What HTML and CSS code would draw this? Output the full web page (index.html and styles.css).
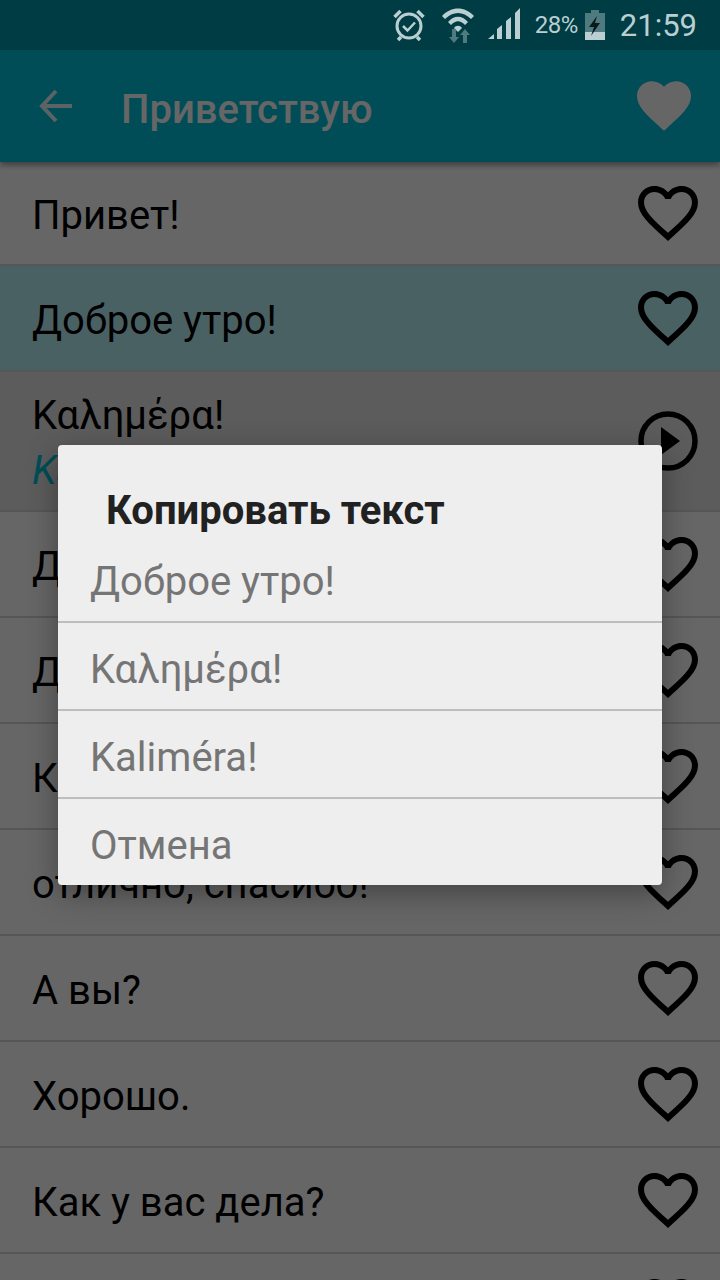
FILE: index.html
```html
<!DOCTYPE html>
<html lang="ru">
<head>
    <meta charset="UTF-8">
    <meta name="viewport" content="width=device-width, initial-scale=1.0">
    <title>Приветствую</title>
    <link rel="stylesheet" href="styles.css">
</head>
<body>
    <svg class="svg-defs" width="0" height="0">
        <symbol id="heart" viewBox="2 3 20 18.350">
            <path d="M16.500 3c-1.740 0-3.410.810-4.500 2.090C10.910 3.810 9.240 3 7.500 3 4.420 3 2 5.420 2 8.500c0 3.780 3.400 6.860 8.550 11.540L12 21.350l1.450-1.320C18.600 15.360 22 12.280 22 8.500 22 5.420 19.580 3 16.500 3zm-4.400 15.550l-.1.100-.110-.100C7.140 14.240 4 11.390 4 8.500 4 6.500 5.500 5 7.500 5c1.540 0 3.040.990 3.570 2.360h1.870C13.460 5.990 14.960 5 16.500 5c2 0 3.500 1.500 3.500 3.500 0 2.890-3.140 5.740-7.900 10.050z" fill="#000"/>
        </symbol>
    </svg>

    <div class="status-bar">
        <svg class="alarm-icon" width="34" height="34" viewBox="0 0 34 34" fill="none" stroke="#b9cfd2">
            <circle cx="17" cy="18" r="12" stroke-width="3"/>
            <path d="M11 18l4.500 4.500 7.500-8" stroke-width="2.500"/>
            <path d="M2.500 9l6-6M31.500 9l-6-6M9 29l-3 3M25 29l3 3" stroke-width="3.500"/>
        </svg>
        <svg class="wifi-icon" width="34" height="36" viewBox="0 0 34 36">
            <path d="M1 9C10-1 24-1 33 9l-3 3C22 4 12 4 4 12Z" fill="#b9cfd2"/>
            <path d="M7 15C13 8 21 8 27 15l-3 3C19 13 15 13 10 18Z" fill="#b9cfd2"/>
            <path d="M13 21C15 18 19 18 21 21l-4 4Z" fill="#b9cfd2"/>
            <path d="M11 22h4v8h3l-5 6-5-6h3ZM22 36v-8h-3l5-6 5 6h-3v8Z" fill="#4f7a80"/>
        </svg>
        <svg class="signal-icon" width="33" height="33" viewBox="0 0 33 33" fill="#b9cfd2">
            <path d="M0 32L6 27V32ZM9 32V22L14 18V32ZM18 32V14L23 10V32ZM27 32V6L32 1V32Z"/>
        </svg>
        <span class="battery-text">28%</span>
        <svg class="battery-icon" width="20" height="30" viewBox="0 0 20 30">
            <path d="M6 0H14V3H20V30H0V3H6Z" fill="#4f7a80"/>
            <path d="M0 22H20V30H0Z" fill="#b9cfd2"/>
            <path d="M12 6L4 17H9L6 26L15 13H10Z" fill="#0a1a1c"/>
        </svg>
        <span class="clock">21:59</span>
    </div>

    <div class="toolbar">
        <svg class="back-icon" width="34" height="34" viewBox="0 0 34 34" fill="none" stroke="#fff" stroke-width="4">
            <path d="M33 17H3M17 2L3 17l14 15"/>
        </svg>
        <div class="toolbar-title">Приветствую</div>
        <svg class="fav-icon" width="54" height="50" viewBox="2 3 20 18.350">
            <path d="M12 21.350l-1.450-1.320C5.400 15.360 2 12.280 2 8.500 2 5.420 4.420 3 7.500 3c1.740 0 3.410.810 4.500 2.090C13.090 3.810 14.760 3 16.500 3 19.580 3 22 5.420 22 8.500c0 3.780-3.400 6.860-8.550 11.540L12 21.350z" fill="#fff"/>
        </svg>
    </div>

    <div class="phrase-list">
        <div class="row row-first">
            <span class="row-text">Привет!</span>
            <svg class="heart"><use href="#heart"/></svg>
        </div>
        <div class="row row-active">
            <span class="row-text">Доброе утро!</span>
            <svg class="heart"><use href="#heart"/></svg>
        </div>
        <div class="row row-open">
            <div class="row-text">
                <div>Καλημέρα!</div>
                <div class="translit">Kaliméra!</div>
            </div>
            <svg class="play" width="60" height="60" viewBox="0 0 60 60">
                <circle cx="30" cy="30" r="27" fill="none" stroke="#000" stroke-width="5.500"/>
                <path d="M23 16L42 30L23 44Z" fill="#000"/>
            </svg>
        </div>
        <div class="row">
            <span class="row-text">Доброе утро!</span>
            <svg class="heart"><use href="#heart"/></svg>
        </div>
        <div class="row">
            <span class="row-text">Добрый день!</span>
            <svg class="heart"><use href="#heart"/></svg>
        </div>
        <div class="row">
            <span class="row-text">Как дела?</span>
            <svg class="heart"><use href="#heart"/></svg>
        </div>
        <div class="row">
            <span class="row-text">отлично, спасибо!</span>
            <svg class="heart"><use href="#heart"/></svg>
        </div>
        <div class="row">
            <span class="row-text">А вы?</span>
            <svg class="heart"><use href="#heart"/></svg>
        </div>
        <div class="row">
            <span class="row-text">Хорошо.</span>
            <svg class="heart"><use href="#heart"/></svg>
        </div>
        <div class="row">
            <span class="row-text">Как у вас дела?</span>
            <svg class="heart"><use href="#heart"/></svg>
        </div>
        <div class="row row-cut">
            <svg class="heart"><use href="#heart"/></svg>
        </div>
    </div>

    <div class="scrim"></div>

    <div class="dialog">
        <div class="dialog-title">Копировать текст</div>
        <div class="dialog-item">Доброе утро!</div>
        <div class="dialog-item">Καλημέρα!</div>
        <div class="dialog-item">Kaliméra!</div>
        <div class="dialog-item dialog-item-last">Отмена</div>
    </div>
</body>
</html>
```

FILE: styles.css
```css
html, body {
    height: 1280px;
    overflow: hidden;
}

body {
    margin: 0;
    position: relative;
    font-family: Roboto, "Noto Sans", sans-serif;
    background: #fff;
}

.svg-defs {
    display: block;
}

/* status bar stays above the scrim, its colours are final */
.status-bar {
    height: 50px;
    background: #003c44;
    display: flex;
    align-items: center;
    justify-content: flex-end;
    padding-right: 23px;
    color: #b9cfd2;
    position: relative;
    z-index: 2;
}

.alarm-icon {
    margin-right: 15px;
}

.wifi-icon {
    margin-right: 13px;
}

.signal-icon {
    margin-right: 14px;
    margin-top: -4px;
}

.battery-text {
    font-size: 24px;
    letter-spacing: -0.5px;
    margin-right: 7px;
}

.battery-icon {
    margin-right: 15px;
}

.clock {
    font-size: 31px;
}

/* toolbar, colours are the undimmed ones, the scrim darkens them */
.toolbar {
    height: 112px;
    background: #00c1da;
    display: flex;
    align-items: center;
    padding: 0 29px 0 39px;
    box-shadow: 0 3px 6px rgba(0, 0, 0, 0.4);
    position: relative;
    color: #fff;
}

.back-icon {
    margin-right: 48px;
    opacity: 0.9;
}

.toolbar-title {
    flex: 1;
    font-size: 40px;
    font-weight: 500;
    padding-top: 6px;
}

/* list */
.phrase-list {
    height: 1118px;
    overflow: hidden;
}

.row {
    height: 106px;
    box-sizing: border-box;
    border-bottom: 2px solid #d6d6d6;
    display: flex;
    align-items: center;
    justify-content: space-between;
    padding: 0 22px 0 32px;
    font-size: 40px;
    color: #000;
}

.row-text {
    margin-top: 4px;
}

.row-first {
    height: 104px;
}

.row-active {
    background: #b9f2fa;
}

.row-open {
    height: 140px;
    background: #e6e6e6;
}

.row-cut {
    justify-content: flex-end;
}

.translit {
    color: #00c1da;
    font-style: italic;
    margin-top: 8px;
}

.heart {
    width: 60px;
    height: 55px;
    flex: none;
}

/* dialog */
.scrim {
    position: absolute;
    inset: 0;
    background: rgba(0, 0, 0, 0.6);
}

.dialog {
    position: absolute;
    left: 58px;
    top: 445px;
    width: 604px;
    height: 440px;
    background: #eeeeee;
    border-radius: 4px;
    box-shadow: 0 8px 30px rgba(0, 0, 0, 0.35);
    overflow: hidden;
}

.dialog-title {
    padding: 44px 0 2px 48px;
    line-height: 44px;
    font-size: 40px;
    font-weight: 700;
    color: #212121;
}

.dialog-item {
    height: 88px;
    box-sizing: border-box;
    border-bottom: 2px solid #bdbdbd;
    padding: 7px 0 0 32px;
    line-height: 80px;
    font-size: 40px;
    color: #757575;
}

.dialog-item-last {
    border-bottom: none;
}
```
